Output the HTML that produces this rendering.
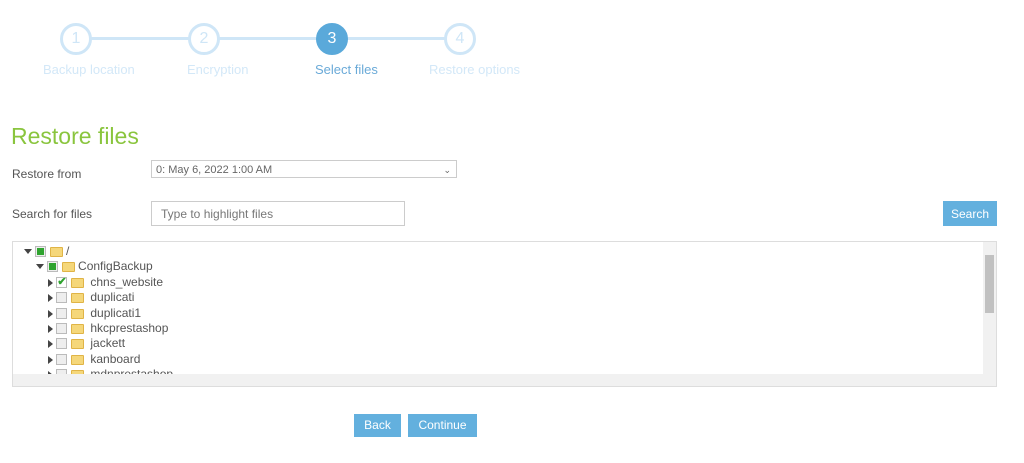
<!DOCTYPE html><html><head><style>
body{margin:0;width:1024px;height:463px;background:#fff;font-family:"Liberation Sans",sans-serif;position:relative;overflow:hidden}
.a{position:absolute}
.c{position:absolute;width:26px;height:26px;border-radius:50%;border:3px solid #cfe6f7;background:#fff;color:#cfe6f7;font-size:16px;text-align:center;line-height:26px;top:23px}
.l{position:absolute;top:62px;font-size:13px;color:#d3e8f8;white-space:nowrap}
.lbl{font-size:12px;color:#555}
.row{position:absolute;height:15px;font-size:12px;color:#555;white-space:nowrap;line-height:15px}
.tri{display:inline-block;width:0;height:0;vertical-align:middle}
.r{border-left:5px solid #444;border-top:4px solid transparent;border-bottom:4px solid transparent}
.d{border-top:5px solid #444;border-left:4px solid transparent;border-right:4px solid transparent}
.cb{display:inline-block;width:9px;height:9px;border:1px solid #bbb;background:#eee;vertical-align:middle;position:relative}
.cbp::after{content:"";position:absolute;left:1px;top:1px;width:7px;height:7px;background:#2fa32f}
.fo{display:inline-block;width:11px;height:8px;background:#f5d77a;border:1px solid #e0b446;vertical-align:middle;border-radius:1px}
.btn{position:absolute;background:#63b0de;color:#fff;font-size:12px;text-align:center}
</style></head><body>
<div class="a" style="left:90px;top:37px;width:360px;height:3px;background:#cfe6f7"></div>
<div class="c" style="left:60px">1</div>
<div class="c" style="left:188px">2</div>
<div class="c" style="left:316px;background:#5aa9da;border-color:#5aa9da;color:#fff">3</div>
<div class="c" style="left:444px">4</div>
<div class="l" style="left:43px">Backup location</div>
<div class="l" style="left:187px">Encryption</div>
<div class="l" style="left:315px;color:#6aaad8">Select files</div>
<div class="l" style="left:429px">Restore options</div>
<div class="a" style="left:11px;top:123px;font-size:23px;color:#8ac53e">Restore files</div>
<div class="a lbl" style="left:12px;top:167px">Restore from</div>
<div class="a" style="left:151px;top:160px;width:306px;height:18px;border:1px solid #ccc;font-size:11px;color:#666;line-height:18px;box-sizing:border-box;padding-left:4px">0: May 6, 2022 1:00 AM<span style="position:absolute;right:5px;font-size:9px">&#8964;</span></div>
<div class="a lbl" style="left:12px;top:207px">Search for files</div>
<div class="a" style="left:151px;top:201px;width:254px;height:25px;border:1px solid #ccc;box-sizing:border-box;font-size:12px;color:#777;line-height:25px;padding-left:9px">Type to highlight files</div>
<div class="btn" style="left:943px;top:201px;width:54px;height:25px;line-height:27px">Search</div>
<div class="a" style="left:12px;top:241px;width:985px;height:146px;border:1px solid #ddd;box-sizing:border-box;overflow:hidden">
<div class="row" style="left:11px;top:2px"><span class="tri d"></span> <span class="cb cbp"></span> <span class="fo"></span> /</div>
<div class="row" style="left:23px;top:17px"><span class="tri d"></span> <span class="cb cbp"></span> <span class="fo"></span> ConfigBackup</div>
<div class="row" style="left:35px;top:33px"><span class="tri r"></span> <span class="cb" style="background:#fff;color:#2fa32f;font-size:11px;line-height:9px;text-align:center;font-weight:bold">✔</span> <span class="fo"></span> &nbsp;chns_website</div>
<div class="row" style="left:35px;top:48px"><span class="tri r"></span> <span class="cb"></span> <span class="fo"></span> &nbsp;duplicati</div>
<div class="row" style="left:35px;top:64px"><span class="tri r"></span> <span class="cb"></span> <span class="fo"></span> &nbsp;duplicati1</div>
<div class="row" style="left:35px;top:79px"><span class="tri r"></span> <span class="cb"></span> <span class="fo"></span> &nbsp;hkcprestashop</div>
<div class="row" style="left:35px;top:94px"><span class="tri r"></span> <span class="cb"></span> <span class="fo"></span> &nbsp;jackett</div>
<div class="row" style="left:35px;top:110px"><span class="tri r"></span> <span class="cb"></span> <span class="fo"></span> &nbsp;kanboard</div>
<div class="row" style="left:35px;top:125px"><span class="tri r"></span> <span class="cb"></span> <span class="fo"></span> &nbsp;mdnprestashop</div>
<div class="a" style="right:0;top:0;width:13px;height:144px;background:#f1f1f1"></div>
<div class="a" style="right:2px;top:13px;width:9px;height:58px;background:#c1c1c1"></div>
<div class="a" style="left:0;bottom:0;width:983px;height:12px;background:#f1f1f1"></div>
</div>
<div class="btn" style="left:354px;top:414px;width:47px;height:23px;line-height:23px">Back</div>
<div class="btn" style="left:408px;top:414px;width:69px;height:23px;line-height:23px">Continue</div>
</body></html>
